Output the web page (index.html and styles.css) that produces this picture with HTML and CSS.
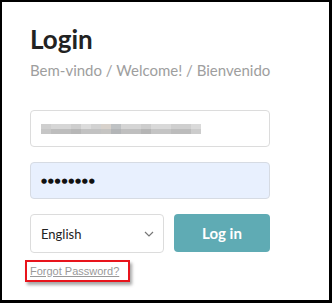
FILE: index.html
```html
<!DOCTYPE html>
<html>
<head>
<meta charset="utf-8">
<link rel="stylesheet" href="styles.css">
</head>
<body>
<div class="frame">
  <h1 class="title">Login</h1>
  <p class="subtitle">Bem-vindo / Welcome! / Bienvenido</p>
  <div class="field email"><span class="blurred"></span></div>
  <div class="field password"><span class="dots">&#9679;&#9679;&#9679;&#9679;&#9679;&#9679;&#9679;&#9679;</span></div>
  <div class="actions">
    <div class="select">
      <span>English</span>
      <svg class="chev" width="10" height="6" viewBox="0 0 10 6"><path d="M1 1l4 4 4-4" fill="none" stroke="#777" stroke-width="1.2"/></svg>
    </div>
    <button class="btn">Log in</button>
  </div>
  <div class="forgot-row"><span class="highlight"><a class="forgot" href="#">Forgot Password?</a></span></div>
</div>
</body>
</html>
```
FILE: styles.css
```css
html, body { margin: 0; padding: 0; background: #fff; }
.frame {
  box-sizing: border-box;
  width: 332px;
  height: 303px;
  border-style: solid;
  border-color: #000;
  border-width: 2px 3px 3px 2px;
  padding: 22px 0 0 28px;
  font-family: Lato, "Liberation Sans", sans-serif;
}
.title {
  margin: 0;
  font-size: 26px;
  line-height: 31px;
  font-weight: 700;
  color: #222;
}
.subtitle {
  margin: 6px 0 0;
  font-size: 15px;
  line-height: 18px;
  color: #9e9e9e;
}
.field {
  box-sizing: border-box;
  width: 240px;
  height: 37px;
  border: 1px solid #dcdcdc;
  border-radius: 4px;
  display: flex;
  align-items: center;
  padding-left: 10px;
}
.email { margin-top: 31px; }
.password { margin-top: 15px; background: #e8f0fe; border-color: #d6dbe3; }
.blurred {
  display: block;
  width: 160px;
  height: 10px;
  background:
    linear-gradient(90deg, #cfcfcf 0 10px, #d6d6d6 10px 30px, #cecece 30px 40px, #dcdcdc 40px 50px, #d2d2d2 50px 60px, #d8d2cc 60px 70px, #bfc2c4 70px 80px, #d5d5d5 80px 100px, #cdcdcd 100px 110px, #d9d9d9 110px 130px, #cfcfcf 130px 150px, #dadada 150px 160px) top / 100% 5px no-repeat,
    linear-gradient(90deg, #c6c6c6 0 10px, #bdbdbd 10px 30px, #b7b7b7 30px 40px, #c2c2c2 40px 60px, #c5c4c2 60px 70px, #b3b5b7 70px 80px, #bfbfbf 80px 100px, #b5b5b5 100px 110px, #c4c4c4 110px 130px, #bcbcbc 130px 150px, #cccccc 150px 160px) bottom / 100% 5px no-repeat;
}
.dots {
  font-family: "DejaVu Sans", sans-serif;
  font-size: 7px;
  letter-spacing: 0.7px;
  color: #111;
}
.actions {
  margin-top: 15px;
  display: flex;
  align-items: flex-start;
  gap: 10px;
}
.select {
  box-sizing: border-box;
  width: 134px;
  height: 39px;
  border: 1px solid #dcdcdc;
  border-radius: 4px;
  display: flex;
  align-items: center;
  justify-content: space-between;
  padding: 0 9px 0 10px;
  font-size: 13px;
  color: #222;
}
.chev { margin-top: 1px; }
.btn {
  box-sizing: border-box;
  width: 96px;
  height: 38px;
  border: none;
  border-radius: 4px;
  background: #5fabb4;
  color: #fff;
  font-family: Lato, "Liberation Sans", sans-serif;
  font-weight: 700;
  font-size: 15px;
  padding: 0;
}
.forgot-row { margin-top: 7px; line-height: 14px; }
.highlight {
  display: inline-block;
  margin-left: -5px;
  border: 2px solid #e8141c;
  padding: 0 9px 2px 3px;
  line-height: 14px;
  box-shadow: 2px 3px 3px rgba(0,0,0,0.35);
}
.forgot {
  font-family: "Liberation Sans", Arial, sans-serif;
  font-size: 11px;
  color: #999;
  text-decoration: underline;
}
```
